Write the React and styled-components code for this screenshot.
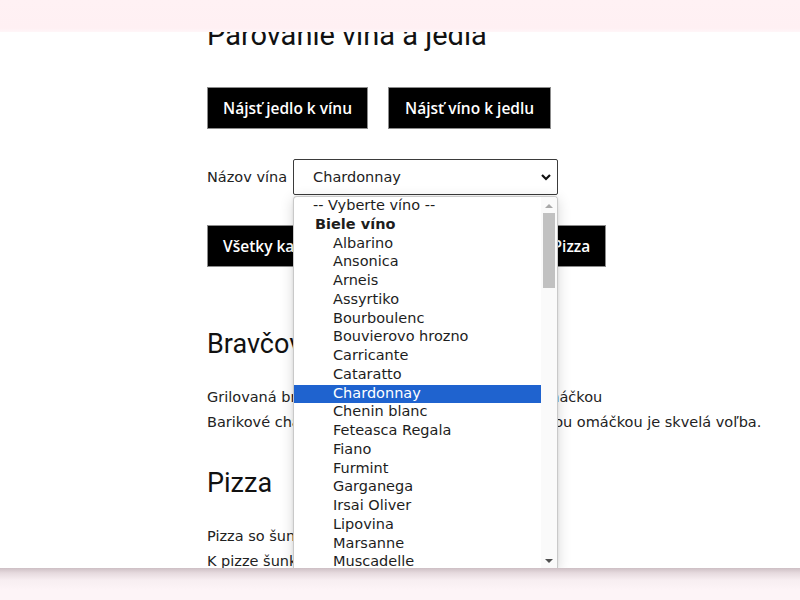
import React from "react";
import styled, { createGlobalStyle } from "styled-components";

const Global = createGlobalStyle`
  html, body { margin: 0; padding: 0; background: #ffffff; }
  body { font-family: "DejaVu Sans", Verdana, sans-serif; color: #1b1b1b; }
  * { box-sizing: border-box; }
`;

const Frame = styled.div`
  width: 800px;
  height: 600px;
  display: flex;
  flex-direction: column;
  overflow: hidden;
`;

const TopBand = styled.div`
  height: 32px;
  flex: none;
  background: linear-gradient(to bottom, #fff1f4 0, #fff0f3 28px, #fff6f8 32px);
`;

const BottomBand = styled.div`
  height: 32px;
  flex: none;
  background: linear-gradient(to bottom, #cdbfc4 0, #e6dade 5px, #f7eef1 12px, #fdf4f7 22px);
`;

const Viewport = styled.div`
  flex: 1;
  position: relative;
  overflow: hidden;
  background: #ffffff;
`;

const Content = styled.div`
  margin-top: -14px;
  padding-left: 207px;
  display: flex;
  flex-direction: column;
`;

const Title = styled.h1`
  margin: 0;
  font-family: Roboto, "Noto Sans", sans-serif;
  font-weight: 400;
  font-size: 29px;
  line-height: 34px;
  color: #111;
`;

const ButtonRow = styled.div`
  display: flex;
  gap: 20px;
  margin-top: ${(p) => p.$top}px;
`;

const Button = styled.button`
  height: 42px;
  padding: 0 ${(p) => p.$pad || 15}px;
  background: #000;
  color: #fff;
  border: 1px solid #8c8c8c;
  font-family: "Open Sans", sans-serif;
  font-weight: 600;
  font-size: 15.5px;
  cursor: pointer;
`;

const FieldRow = styled.div`
  display: flex;
  align-items: center;
  gap: 6px;
  margin-top: 30px;
`;

const Label = styled.label`
  font-family: "DejaVu Sans", Verdana, sans-serif;
  font-size: 14.5px;
  color: #222;
`;

const Select = styled.div`
  width: 265px;
  height: 36px;
  border: 1px solid #3b3b3b;
  border-radius: 2px;
  display: flex;
  align-items: center;
  justify-content: space-between;
  padding: 0 5px 0 19px;
  font-size: 14.5px;
  color: #222;
  background: #fff;
`;

const Section = styled.section`
  display: flex;
  flex-direction: column;
  margin-top: ${(p) => p.$top}px;
`;

const Heading = styled.h2`
  margin: 0 0 24px;
  font-family: Roboto, "Noto Sans", sans-serif;
  font-weight: 400;
  font-size: 27px;
  line-height: 34px;
  color: #111;
`;

const Para = styled.p`
  margin: 0;
  font-size: 14.5px;
  line-height: 25px;
  color: #222;
  white-space: nowrap;
`;

const Popup = styled.div`
  position: absolute;
  left: 293px;
  top: 164px;
  width: 265px;
  height: 372px;
  display: flex;
  background: #fff;
  border: 1px solid #c9c9c9;
  border-bottom: none;
  border-radius: 4px 4px 0 0;
  box-shadow: 0 3px 14px rgba(0, 0, 0, 0.16), 0 0 3px rgba(0, 0, 0, 0.08);
  overflow: hidden;
`;

const List = styled.div`
  flex: 1;
  display: flex;
  flex-direction: column;
  overflow: hidden;
`;

const Option = styled.div`
  flex: none;
  height: 18.75px;
  line-height: 17px;
  padding-left: ${(p) => (p.$group ? 21 : p.$indent ? 39 : 19)}px;
  font-size: 14.5px;
  font-weight: ${(p) => (p.$group ? 700 : 400)};
  color: ${(p) => (p.$selected ? "#fff" : "#1d1d1d")};
  background: ${(p) => (p.$selected ? "#1f63cf" : "transparent")};
  white-space: nowrap;
`;

const ScrollTrack = styled.div`
  width: 16px;
  flex: none;
  display: flex;
  flex-direction: column;
  align-items: center;
  background: #fafafa;
  padding: 1px 1px 0;
`;

const Arrow = styled.div`
  height: 14px;
  flex: none;
  display: flex;
  align-items: center;
  justify-content: center;
`;

const Thumb = styled.div`
  width: 12px;
  height: 75px;
  flex: none;
  margin-top: 1px;
  background: #c1c1c1;
`;

const Spacer = styled.div`
  flex: 1;
`;

const wines = [
  "Albarino",
  "Ansonica",
  "Arneis",
  "Assyrtiko",
  "Bourboulenc",
  "Bouvierovo hrozno",
  "Carricante",
  "Cataratto",
  "Chardonnay",
  "Chenin blanc",
  "Feteasca Regala",
  "Fiano",
  "Furmint",
  "Garganega",
  "Irsai Oliver",
  "Lipovina",
  "Marsanne",
  "Muscadelle",
  "Müller Thurgau",
  "Muškát moravský",
];

export default function App() {
  return (
    <>
      <Global />
      <Frame>
        <TopBand />
        <Viewport>
          <Content>
            <Title>Párovanie vína a jedla</Title>
            <ButtonRow $top={35}>
              <Button>Nájsť jedlo k vínu</Button>
              <Button $pad={16}>Nájsť víno k jedlu</Button>
            </ButtonRow>
            <FieldRow>
              <Label>Názov vína</Label>
              <Select>
                <span>Chardonnay</span>
                <svg width="12" height="8" viewBox="0 0 12 8">
                  <path d="M2 2 L6 6 L10 2" fill="none" stroke="#111" strokeWidth="2.2" />
                </svg>
              </Select>
            </FieldRow>
            <ButtonRow $top={30}>
              <Button>Všetky kategórie</Button>
              <Button>Kuracie mäso</Button>
              <Button>Pizza</Button>
            </ButtonRow>
            <Section $top={60}>
              <Heading>Bravčové mäso</Heading>
              <Para>Grilovaná bravčová panenka s rozmarínovou omáčkou</Para>
              <Para>Barikové chardonnay k tejto panenke so šalviovou omáčkou je skvelá voľba.</Para>
            </Section>
            <Section $top={31}>
              <Heading>Pizza</Heading>
              <Para>Pizza so šunkou a syrom</Para>
              <Para>K pizze šunkovej sa hodí svieže biele víno.</Para>
            </Section>
          </Content>
          <Popup>
            <List>
              <Option>-- Vyberte víno --</Option>
              <Option $group>Biele víno</Option>
              {wines.map((w) => (
                <Option key={w} $indent $selected={w === "Chardonnay"}>
                  {w}
                </Option>
              ))}
            </List>
            <ScrollTrack>
              <Arrow>
                <svg width="8" height="5" viewBox="0 0 8 5">
                  <path d="M0 5 L4 1 L8 5 Z" fill="#a8a8a8" />
                </svg>
              </Arrow>
              <Thumb />
              <Spacer />
              <Arrow>
                <svg width="8" height="5" viewBox="0 0 8 5">
                  <path d="M0 0 L8 0 L4 4 Z" fill="#505050" />
                </svg>
              </Arrow>
            </ScrollTrack>
          </Popup>
        </Viewport>
        <BottomBand />
      </Frame>
    </>
  );
}
